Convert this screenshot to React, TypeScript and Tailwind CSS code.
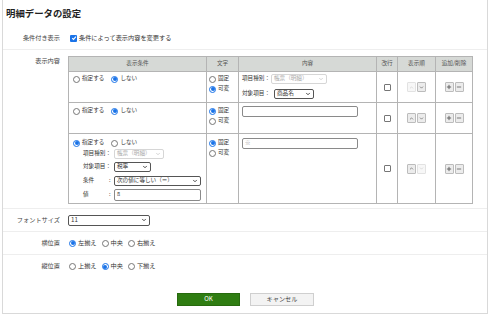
import { ChevronDown, ChevronUp, Plus, Minus } from "lucide-react";

function Radio({ checked, label }: { checked?: boolean; label: string }) {
  return (
    <span className="inline-flex items-center gap-[2px]">
      <span
        className={
          checked
            ? "w-[7px] h-[7px] rounded-full border border-[#1a73e8] bg-white flex items-center justify-center"
            : "w-[7px] h-[7px] rounded-full border border-[#767676] bg-white"
        }
      >
        {checked && <span className="w-[4px] h-[4px] rounded-full bg-[#1a73e8]" />}
      </span>
      <span>{label}</span>
    </span>
  );
}

function Check({ checked }: { checked?: boolean }) {
  if (checked)
    return (
      <span className="w-[7px] h-[7px] rounded-[1px] bg-[#1a73e8] flex items-center justify-center">
        <svg width="6" height="6" viewBox="0 0 10 10">
          <path d="M2 5.2 L4.2 7.4 L8.2 2.6" stroke="white" strokeWidth="1.8" fill="none" />
        </svg>
      </span>
    );
  return <span className="inline-block w-[7px] h-[7px] rounded-[1px] border border-[#767676] bg-white" />;
}

function Select({ value, w, disabled }: { value: string; w: string; disabled?: boolean }) {
  return (
    <span
      className={
        (disabled
          ? "border-[#d6d6d6] text-[#aaa] "
          : "border-[#555] text-[#333] ") +
        w +
        " h-[10px] border rounded-[2px] bg-white flex items-center justify-between pl-[2px] pr-[2px] whitespace-nowrap"
      }
    >
      <span>{value}</span>
      <ChevronDown size={6} strokeWidth={disabled ? 2 : 3.5} />
    </span>
  );
}

function SmallBtn({ kind, disabled }: { kind: "up" | "down" | "plus" | "minus"; disabled?: boolean }) {
  const cls = disabled
    ? "border-[#e2e2e2] bg-[#f7f7f7] text-[#ccc]"
    : "border-[#bcbcbc] bg-[#ececec] text-[#555]";
  return (
    <span className={"w-[9px] h-[10px] border rounded-[1px] flex items-center justify-center " + cls}>
      {kind === "up" && <ChevronUp size={5} strokeWidth={3} />}
      {kind === "down" && <ChevronDown size={5} strokeWidth={3} />}
      {kind === "plus" && <Plus size={6} strokeWidth={3.5} />}
      {kind === "minus" && <Minus size={6} strokeWidth={3} />}
    </span>
  );
}

function Order({ up, down }: { up: boolean; down: boolean }) {
  return (
    <div className="flex justify-center gap-[1px]">
      <SmallBtn kind="up" disabled={!up} />
      <SmallBtn kind="down" disabled={!down} />
    </div>
  );
}

function AddRemove() {
  return (
    <div className="flex justify-center gap-[1px]">
      <SmallBtn kind="plus" />
      <SmallBtn kind="minus" />
    </div>
  );
}

export default function App() {
  const th = "border border-[#b4b4b4] bg-[#d6d9d6] font-normal text-[#555] h-[15px] p-0";
  const td = "border border-[#b4b4b4] p-0 align-top";
  const tdm = "border border-[#b4b4b4] p-0 align-middle";

  return (
    <div className="w-[489px] h-[315px] bg-white font-['Noto_Sans_CJK_JP',sans-serif] text-[6.2px] leading-none text-[#333]">
      <div className="ml-[2px] w-[486px] h-[314px] border-x border-b border-[#d9d9d9] flex flex-col">
        <div className="h-[27px] flex items-center pl-[3px] text-[9.4px] font-bold text-[#222]">
          明細データの設定
        </div>

        <div className="h-[23px] border-b border-[#eee] grid grid-cols-[57px_1fr] gap-x-[8px] items-center">
          <div className="text-right text-[#444]">条件付き表示</div>
          <div className="flex items-center gap-[2px] pl-[2px]">
            <Check checked />
            <span>条件によって表示内容を変更する</span>
          </div>
        </div>

        <div className="h-[159px] border-b border-[#eee] grid grid-cols-[57px_1fr] gap-x-[8px] pt-[6px]">
          <div className="text-right text-[#444] pt-[2px]">表示内容</div>
          <table className="border-collapse table-fixed w-[404px] self-start text-[5.6px]">
            <colgroup>
              <col className="w-[138px]" />
              <col className="w-[32px]" />
              <col className="w-[138px]" />
              <col className="w-[21px]" />
              <col className="w-[38px]" />
              <col className="w-[37px]" />
            </colgroup>
            <thead>
              <tr>
                <th className={th}>表示条件</th>
                <th className={th}>文字</th>
                <th className={th}>内容</th>
                <th className={th}>改行</th>
                <th className={th}>表示順</th>
                <th className={th}>追加/削除</th>
              </tr>
            </thead>
            <tbody>
              <tr className="h-[31px]">
                <td className={td}>
                  <div className="flex items-center gap-[7px] pl-[4px] pt-[2px] h-[12px]">
                    <Radio label="指定する" />
                    <Radio checked label="しない" />
                  </div>
                </td>
                <td className={td}>
                  <div className="flex flex-col pl-[2px] pt-[2px]">
                    <div className="h-[10px] flex items-center"><Radio label="固定" /></div>
                    <div className="h-[10px] flex items-center"><Radio checked label="可変" /></div>
                  </div>
                </td>
                <td className={td}>
                  <div className="flex flex-col gap-[5px] pl-[3px] pt-[2px]">
                    <div className="h-[10px] flex items-center whitespace-nowrap">
                      <span className="pr-[1px]">項目種別：</span>
                      <Select value="帳票（明細）" w="w-[56px]" disabled />
                    </div>
                    <div className="h-[10px] flex items-center whitespace-nowrap">
                      <span className="w-[32px]">対象項目：</span>
                      <Select value="商品名" w="w-[40px]" />
                    </div>
                  </div>
                </td>
                <td className={tdm}>
                  <div className="flex justify-center"><Check /></div>
                </td>
                <td className={tdm}><Order up={false} down /></td>
                <td className={tdm}><AddRemove /></td>
              </tr>

              <tr className="h-[31px]">
                <td className={td}>
                  <div className="flex items-center gap-[7px] pl-[4px] pt-[3px] h-[13px]">
                    <Radio label="指定する" />
                    <Radio checked label="しない" />
                  </div>
                </td>
                <td className={td}>
                  <div className="flex flex-col pl-[2px] pt-[3px]">
                    <div className="h-[10px] flex items-center"><Radio checked label="固定" /></div>
                    <div className="h-[10px] flex items-center"><Radio label="可変" /></div>
                  </div>
                </td>
                <td className={td}>
                  <div className="pl-[3px] pt-[3px]">
                    <div className="w-[116px] h-[11px] border border-[#8a8a8a] rounded-[2px] bg-white" />
                  </div>
                </td>
                <td className={tdm}>
                  <div className="flex justify-center"><Check /></div>
                </td>
                <td className={tdm}><Order up down /></td>
                <td className={tdm}><AddRemove /></td>
              </tr>

              <tr className="h-[70px]">
                <td className={td}>
                  <div className="flex flex-col pl-[4px] pt-[4px]">
                    <div className="h-[10px] flex items-center gap-[7px]">
                      <Radio checked label="指定する" />
                      <Radio label="しない" />
                    </div>
                    <div className="h-[12px] flex items-center pl-[10px] whitespace-nowrap">
                      <span className="w-[31px]">項目種別：</span>
                      <Select value="帳票（明細）" w="w-[50px]" disabled />
                    </div>
                    <div className="h-[14px] flex items-center pl-[10px] whitespace-nowrap">
                      <span className="w-[31px]">対象項目：</span>
                      <Select value="税率" w="w-[37px]" />
                    </div>
                    <div className="h-[14px] flex items-center pl-[10px]">
                      <span className="w-[26px]">条件</span>
                      <span className="w-[5px]">:</span>
                      <Select value="次の値に等しい（＝）" w="w-[87px]" />
                    </div>
                    <div className="h-[14px] flex items-center pl-[10px]">
                      <span className="w-[26px]">値</span>
                      <span className="w-[5px]">:</span>
                      <span className="w-[87px] h-[12px] border border-[#8a8a8a] rounded-[2px] bg-white flex items-center pl-[2px]">8</span>
                    </div>
                  </div>
                </td>
                <td className={td}>
                  <div className="flex flex-col pl-[2px] pt-[4px]">
                    <div className="h-[10px] flex items-center"><Radio checked label="固定" /></div>
                    <div className="h-[10px] flex items-center"><Radio label="可変" /></div>
                  </div>
                </td>
                <td className={td}>
                  <div className="pl-[3px] pt-[4px]">
                    <div className="w-[116px] h-[11px] border border-[#8a8a8a] rounded-[2px] bg-white flex items-center pl-[2px] text-[#999]">※</div>
                  </div>
                </td>
                <td className={tdm}>
                  <div className="flex justify-center"><Check /></div>
                </td>
                <td className={tdm}><Order up down={false} /></td>
                <td className={tdm}><AddRemove /></td>
              </tr>
            </tbody>
          </table>
        </div>

        <div className="h-[23px] border-b border-[#eee] grid grid-cols-[57px_1fr] gap-x-[8px] items-center">
          <div className="text-right text-[#444]">フォントサイズ</div>
          <span className="w-[82px] h-[11px] border border-[#555] rounded-[2px] bg-white flex items-center justify-between px-[2px]">
            <span>11</span>
            <ChevronDown size={6} strokeWidth={3.5} />
          </span>
        </div>

        <div className="h-[23px] border-b border-[#eee] grid grid-cols-[57px_1fr] gap-x-[8px] items-center">
          <div className="text-right text-[#444]">横位置</div>
          <div className="flex items-center gap-[5px] pl-[1px]">
            <Radio checked label="左揃え" />
            <Radio label="中央" />
            <Radio label="右揃え" />
          </div>
        </div>

        <div className="h-[23px] grid grid-cols-[57px_1fr] gap-x-[8px] items-center">
          <div className="text-right text-[#444]">縦位置</div>
          <div className="flex items-center gap-[5px] pl-[1px]">
            <Radio label="上揃え" />
            <Radio checked label="中央" />
            <Radio label="下揃え" />
          </div>
        </div>

        <div className="flex justify-center gap-[10px] pt-[15px] pl-[1px]">
          <button className="w-[63px] h-[13px] bg-[#2f7d12] border border-[#276a0e] text-white text-[6.2px]">OK</button>
          <button className="w-[64px] h-[13px] bg-[#f3f3f3] border border-[#cfcfcf] text-[#444] text-[6.2px]">キャンセル</button>
        </div>
      </div>
    </div>
  );
}
